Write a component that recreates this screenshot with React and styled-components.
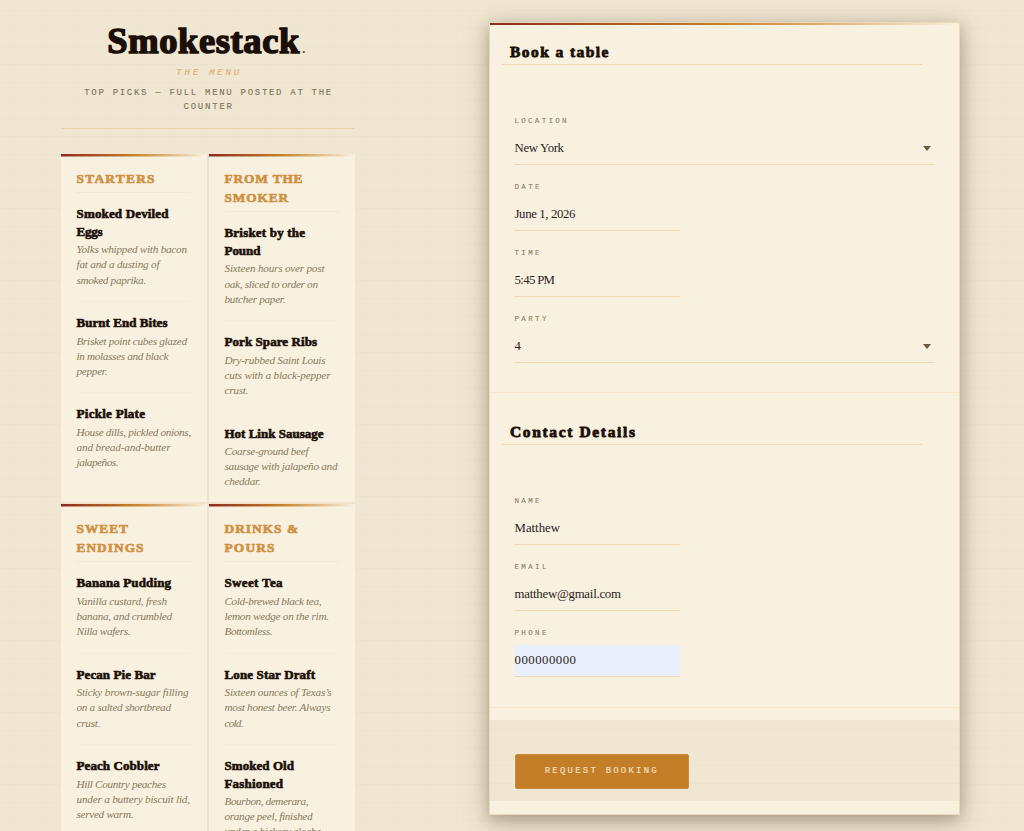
import React, { useLayoutEffect, useRef, useState } from "react";
import styled, { createGlobalStyle } from "styled-components";

const menu = [
  {
    title: [["STARTERS", 78]],
    items: [
      {
        name: [["Smoked Deviled", 92], ["Eggs", 26]],
        text: [["Yolks whipped with bacon", 110.5], ["fat and a dusting of", 83], ["smoked paprika.", 69.5]],
      },
      {
        name: [["Burnt End Bites", 91]],
        text: [["Brisket point cubes glazed", 110.5], ["in molasses and black", 92], ["pepper.", 31]],
      },
      {
        name: [["Pickle Plate", 68.5]],
        text: [["House dills, pickled onions,", 114.5], ["and bread-and-butter", 94], ["jalapeños.", 42]],
      },
    ],
  },
  {
    title: [["FROM THE", 78], ["SMOKER", 63.5]],
    items: [
      {
        name: [["Brisket by the", 80.5], ["Pound", 36]],
        text: [["Sixteen hours over post", 100], ["oak, sliced to order on", 93.5], ["butcher paper.", 61]],
      },
      {
        name: [["Pork Spare Ribs", 92.5]],
        text: [["Dry-rubbed Saint Louis", 101], ["cuts with a black-pepper", 106], ["crust.", 24]],
      },
      {
        name: [["Hot Link Sausage", 99]],
        text: [["Coarse-ground beef", 84], ["sausage with jalapeño and", 113], ["cheddar.", 36]],
      },
    ],
  },
  {
    title: [["SWEET", 51.5], ["ENDINGS", 67]],
    items: [
      {
        name: [["Banana Pudding", 94.5]],
        text: [["Vanilla custard, fresh", 90.5], ["banana, and crumbled", 95.5], ["Nilla wafers.", 54]],
      },
      {
        name: [["Pecan Pie Bar", 79]],
        text: [["Sticky brown-sugar filling", 112], ["on a salted shortbread", 94.5], ["crust.", 24]],
      },
      {
        name: [["Peach Cobbler", 83]],
        text: [["Hill Country peaches", 89.5], ["under a buttery biscuit lid,", 113.5], ["served warm.", 57]],
      },
    ],
  },
  {
    title: [["DRINKS &", 73.5], ["POURS", 50]],
    items: [
      {
        name: [["Sweet Tea", 58]],
        text: [["Cold-brewed black tea,", 97], ["lemon wedge on the rim.", 104.5], ["Bottomless.", 48]],
      },
      {
        name: [["Lone Star Draft", 90.5]],
        text: [["Sixteen ounces of Texas’s", 107], ["most honest beer. Always", 106], ["cold.", 19]],
      },
      {
        name: [["Smoked Old", 69.5], ["Fashioned", 58.5]],
        text: [["Bourbon, demerara,", 84], ["orange peel, finished", 88], ["under a hickory cloche.", 99]],
      },
    ],
  },
];

const booking = [
  { label: ["LOCATION", 52], value: ["New York", 49.5], select: true },
  { label: ["DATE", 25], value: ["June 1, 2026", 61] },
  { label: ["TIME", 25], value: ["5:45 PM", 40.5] },
  { label: ["PARTY", 32], value: ["4", 6], select: true },
];

const contact = [
  { label: ["NAME", 25], value: ["Matthew", 45.5] },
  { label: ["EMAIL", 32], value: ["matthew@gmail.com", 106.5] },
  { label: ["PHONE", 32], value: ["000000000", 61.5], filled: true },
];

// tracks a line out (or in) so that it sets to the given measure
const Fit = ({ w, children }) => {
  const ref = useRef(null);
  const [space, setSpace] = useState(0);

  useLayoutEffect(() => {
    const natural = ref.current.getBoundingClientRect().width;
    const gaps = children.length - 1;
    if (gaps > 0) {
      setSpace((w - natural) / gaps);
    }
  }, [w, children]);

  return (
    <Line ref={ref} style={{ letterSpacing: space, marginRight: -space }}>
      {children}
    </Line>
  );
};

const Lines = ({ rows }) =>
  rows.map(([text, w]) => (
    <Row key={text}>
      <Fit w={w}>{text}</Fit>
    </Row>
  ));

const Fields = ({ list }) => (
  <FieldList>
    {list.map(({ label, value, select, filled }) => (
      <Field key={label[0]}>
        <Label>
          <Fit w={label[1]}>{label[0]}</Fit>
        </Label>
        <Control $wide={select} $filled={filled}>
          <Fit w={value[1]}>{value[0]}</Fit>
          {select ? <Caret /> : null}
        </Control>
      </Field>
    ))}
  </FieldList>
);

const App = () => {
  return (
    <Page>
      <GlobalStyle />
      <MenuColumn>
        <Header>
          <Brand>
            <Fit w={192}>Smokestack</Fit>
            <Dot>.</Dot>
          </Brand>
          <Sub>
            <Fit w={63}>THE MENU</Fit>
          </Sub>
          <Note>
            <Lines rows={[["TOP PICKS — FULL MENU POSTED AT THE", 247], ["COUNTER", 48.5]]} />
          </Note>
        </Header>
        <Grid>
          {menu.map(({ title, items }) => (
            <Card key={title[0][0]}>
              <CardTitle>
                <Lines rows={title} />
              </CardTitle>
              {items.map(({ name, text }) => (
                <Item key={name[0][0]}>
                  <ItemName>
                    <Lines rows={name} />
                  </ItemName>
                  <ItemText>
                    <Lines rows={text} />
                  </ItemText>
                </Item>
              ))}
            </Card>
          ))}
        </Grid>
      </MenuColumn>
      <Booking>
        <Section $height={370}>
          <Heading>
            <Fit w={98.5}>Book a table</Fit>
          </Heading>
          <Fields list={booking} />
        </Section>
        <Section $height={314.5}>
          <Heading>
            <Fit w={125}>Contact Details</Fit>
          </Heading>
          <Fields list={contact} />
        </Section>
        <Footer>
          <Button>
            <Fit w={112}>REQUEST BOOKING</Fit>
          </Button>
        </Footer>
      </Booking>
    </Page>
  );
};

export default App;

const GlobalStyle = createGlobalStyle`
  * {
    box-sizing: border-box;
  }
  html,
  body {
    margin: 0;
    height: 831px;
    overflow: hidden;
  }
`;

const display = `"Liberation Serif", serif`;
const mono = `"Liberation Mono", monospace`;

const Page = styled.div`
  width: 1024px;
  height: 831px;
  overflow: hidden;
  display: flex;
  align-items: flex-start;
  padding-left: 60.5px;
  font-family: ${display};
  color: #1a0f08;
  background-color: #f0e6d2;
  background-image: repeating-linear-gradient(
      180deg,
      transparent 0 17px,
      rgba(120, 80, 30, 0.02) 17px 18px
    ),
    linear-gradient(
      90deg,
      transparent 31px,
      rgba(120, 80, 30, 0.012) 31px
    );
  background-size: auto, 32px 100%;
  background-position: 0 -7px, 10px 0;
`;

const Line = styled.span`
  display: inline-block;
  white-space: pre;
`;

const Row = styled.div`
  white-space: nowrap;
`;

const MenuColumn = styled.div`
  width: 294.5px;
  flex: none;
`;

const Header = styled.div`
  height: 128.5px;
  padding-top: 18px;
  border-bottom: 1px solid #ebd0a9;
  text-align: center;
`;

const Brand = styled.div`
  height: 47px;
  line-height: 46px;
  margin-left: -3px;
  font-size: 36.5px;
  font-weight: bold;
  -webkit-text-stroke: 1.5px #1a0f08;
`;

const Dot = styled.span`
  margin-left: 3px;
  font-size: 12px;
  font-weight: bold;
  color: #8b2a1f;
  -webkit-text-stroke: 0 #8b2a1f;
`;

const Sub = styled.div`
  height: 16px;
  line-height: 16px;
  font-family: ${mono};
  font-size: 9px;
  font-style: italic;
  color: #e0b272;
  -webkit-text-stroke: 0.2px #e0b272;
`;

const Note = styled.div`
  margin-top: 5px;
  font-family: ${mono};
  font-size: 9px;
  line-height: 14.4px;
  color: #7d7156;
  -webkit-text-stroke: 0.1px #7d7156;
`;

const Grid = styled.div`
  margin-top: 25px;
  display: grid;
  grid-template-columns: 1fr 1fr;
  grid-template-rows: 348.5px 380px;
  gap: 1.5px;
  background-color: #efe3cc;
`;

const Card = styled.div`
  padding: 15.5px 16px 0;
  background: linear-gradient(90deg, #8b2a1f, #c9812b 50%, #f9f1df) 0 0 / 100%
    2.5px no-repeat #f9f1df;
`;

const CardTitle = styled.div`
  padding-bottom: 4px;
  border-bottom: 1px solid #f5e8d0;
  font-size: 13.3px;
  font-weight: bold;
  line-height: 19.2px;
  color: #cf9143;
  -webkit-text-stroke: 0.7px #cf9143;
`;

const Item = styled.div`
  padding: 12px 0 13.2px;
  border-bottom: 1px solid #f7ecd8;
  &:last-child {
    border-bottom: none;
  }
`;

const ItemName = styled.div`
  font-size: 13px;
  font-weight: bold;
  line-height: 17.5px;
  -webkit-text-stroke: 0.6px #1a0f08;
`;

const ItemText = styled.div`
  margin-top: 2px;
  font-size: 11.2px;
  font-style: italic;
  line-height: 15.2px;
  color: #857a61;
`;

const Booking = styled.div`
  flex: none;
  width: 471px;
  height: 792.5px;
  margin: 22px 0 0 133.5px;
  border: 1px solid #ecd9b9;
  background: linear-gradient(90deg, #8b2a1f, #c9812b 50%, #f9f1df) 0 0 / 100%
    2px no-repeat #f9f1df;
  box-shadow: 0 4px 14px rgba(60, 50, 25, 0.3), 0 8px 28px rgba(60, 50, 25, 0.2);
`;

const Section = styled.div`
  height: ${({ $height }) => $height}px;
  padding-top: 16px;
  border-bottom: 1px solid #f5e5cb;
  & + & {
    padding-top: 26px;
  }
`;

const Heading = styled.div`
  height: 26px;
  width: 420px;
  margin-left: 12.5px;
  padding-left: 8px;
  border-bottom: 1px solid #f0dbb9;
  font-size: 15.5px;
  font-weight: bold;
  line-height: 26px;
  -webkit-text-stroke: 0.8px #1a0f08;
`;

const FieldList = styled.div`
  padding: 48px 25px 0;
`;

const Field = styled.div`
  height: 66.1px;
`;

const Label = styled.div`
  height: 19.6px;
  line-height: 17px;
  font-family: ${mono};
  font-size: 7.5px;
  color: #887e67;
  -webkit-text-stroke: 0.1px #887e67;
`;

const Control = styled.div`
  width: ${({ $wide }) => ($wide ? "420px" : "165px")};
  height: 32px;
  display: flex;
  align-items: center;
  justify-content: space-between;
  border-bottom: 1px solid #f0d8b4;
  background-color: ${({ $filled }) => ($filled ? "#e8effd" : "transparent")};
  font-size: 12.8px;
  color: #2c221a;
`;

const Caret = styled.span`
  margin-right: 4px;
  border: 4px solid transparent;
  border-top: 5.5px solid #6b5a3c;
  border-bottom: none;
`;

const Footer = styled.div`
  height: 81.5px;
  margin-top: 12px;
  padding: 34.5px 25px 0;
  background-color: #f0e6d2;
  background-image: repeating-linear-gradient(
    0deg,
    transparent 0 17px,
    rgba(120, 80, 30, 0.025) 17px 18px
  );
`;

const Button = styled.button`
  display: flex;
  align-items: center;
  justify-content: center;
  width: 174.5px;
  height: 34.5px;
  padding: 0 2px 1px 0;
  border: 1px solid #cb8b3c;
  border-radius: 2px;
  background-color: #c57e28;
  color: #f3dfbd;
  font-family: ${mono};
  font-size: 9px;
  -webkit-text-stroke: 0.2px #f3dfbd;
`;
